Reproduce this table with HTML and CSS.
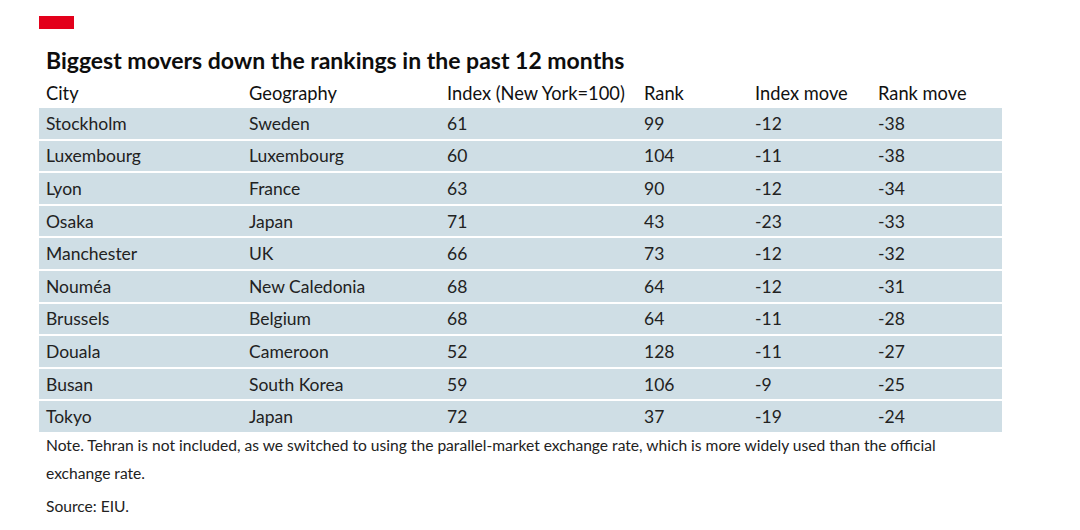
FILE: index.html
```html
<!DOCTYPE html>
<html>
<head>
<meta charset="utf-8">
<link rel="stylesheet" href="styles.css">
</head>
<body>
<div class="chart">
  <div class="tag"></div>
  <h1 class="title">Biggest movers down the rankings in the past 12 months</h1>
  <div class="table">
    <div class="row head">
      <span>City</span><span>Geography</span><span>Index (New York=100)</span><span>Rank</span><span>Index move</span><span>Rank move</span>
    </div>
    <div class="row"><span>Stockholm</span><span>Sweden</span><span>61</span><span>99</span><span>-12</span><span>-38</span></div>
    <div class="row"><span>Luxembourg</span><span>Luxembourg</span><span>60</span><span>104</span><span>-11</span><span>-38</span></div>
    <div class="row"><span>Lyon</span><span>France</span><span>63</span><span>90</span><span>-12</span><span>-34</span></div>
    <div class="row"><span>Osaka</span><span>Japan</span><span>71</span><span>43</span><span>-23</span><span>-33</span></div>
    <div class="row"><span>Manchester</span><span>UK</span><span>66</span><span>73</span><span>-12</span><span>-32</span></div>
    <div class="row"><span>Nouméa</span><span>New Caledonia</span><span>68</span><span>64</span><span>-12</span><span>-31</span></div>
    <div class="row"><span>Brussels</span><span>Belgium</span><span>68</span><span>64</span><span>-11</span><span>-28</span></div>
    <div class="row"><span>Douala</span><span>Cameroon</span><span>52</span><span>128</span><span>-11</span><span>-27</span></div>
    <div class="row"><span>Busan</span><span>South Korea</span><span>59</span><span>106</span><span>-9</span><span>-25</span></div>
    <div class="row"><span>Tokyo</span><span>Japan</span><span>72</span><span>37</span><span>-19</span><span>-24</span></div>
  </div>
  <p class="note">Note. Tehran is not included, as we switched to using the parallel-market exchange rate, which is more widely used than the official exchange rate.</p>
  <p class="source">Source: EIU.</p>
</div>
</body>
</html>
```
FILE: styles.css
```css
html, body {
  margin: 0;
  padding: 0;
  background: #ffffff;
}
body {
  font-family: Lato, "Noto Sans", sans-serif;
  color: #1a1a1a;
}
.chart {
  padding: 16px 0 0 39px;
  width: 963px;
}
.tag {
  width: 35px;
  height: 13px;
  background: #e3001b;
}
.title {
  margin: 17px 0 0 7px;
  font-size: 23px;
  line-height: 28px;
  font-weight: 700;
  color: #0d0d0d;
}
.table {
  margin-top: 6px;
  display: flex;
  flex-direction: column;
  gap: 2px;
}
.row {
  display: grid;
  grid-template-columns: 203px 198px 197px 111px 123px 1fr;
  height: 30.6px;
  align-items: center;
  padding-left: 7px;
  background: #cfdee5;
  font-size: 17.5px;
  color: #222;
}
.row.head {
  background: transparent;
  height: 26px;
  font-size: 18.3px;
  color: #111;
}
.note {
  margin: -1px 0 0 7px;
  width: 930px;
  font-size: 15.6px;
  line-height: 28px;
  color: #222;
}
.source {
  margin: 5px 0 0 7px;
  font-size: 15.6px;
  line-height: 28px;
  color: #222;
}
```
